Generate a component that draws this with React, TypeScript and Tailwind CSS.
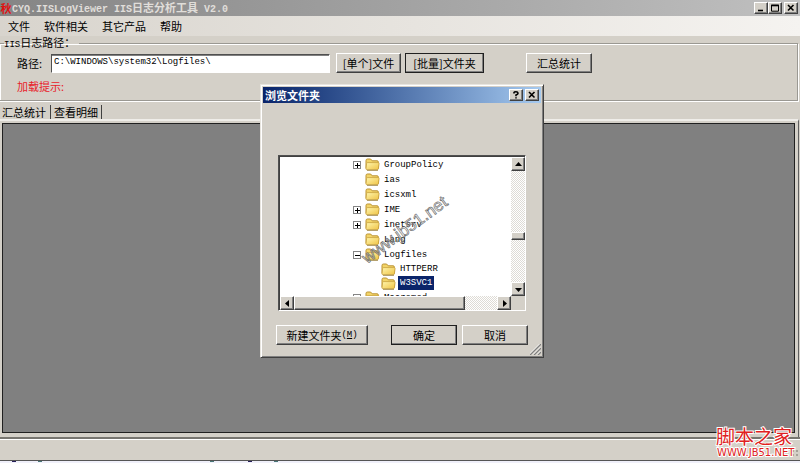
import { useState, type ReactNode } from "react";

const raised =
  "border border-t-white border-l-white border-r-[#404040] border-b-[#404040] bg-[#d4d0c8] shadow-[inset_-1px_-1px_0_#808080]";
const sunken =
  "border border-t-[#505050] border-l-[#505050] border-r-white border-b-white";
const cjk = "font-['Noto_Sans_CJK_SC',sans-serif] text-[11px]";
const mono = "font-['Liberation_Mono','Noto_Sans_CJK_SC',monospace] text-[9px]";
const checker =
  "bg-[repeating-conic-gradient(#ffffff_0_25%,#dedbd5_0_50%)] bg-[length:2px_2px]";

function PushButton({
  children,
  className,
  strong = false,
  onClick,
}: {
  children: ReactNode;
  className: string;
  strong?: boolean;
  onClick?: () => void;
}) {
  return (
    <button
      type="button"
      onClick={onClick}
      className={`flex h-5 shrink-0 items-center justify-center whitespace-nowrap ${raised} ${
        strong ? "outline-1 -outline-offset-1 outline-[#202020]" : ""
      } ${className}`}
    >
      {children}
    </button>
  );
}

function CaptionButton({
  label,
  children,
  onClick,
}: {
  label: string;
  children: ReactNode;
  onClick?: () => void;
}) {
  return (
    <button
      type="button"
      aria-label={label}
      onClick={onClick}
      className={`flex h-3 w-3.5 items-center justify-center ${raised}`}
    >
      <svg width="10" height="8" viewBox="0 0 10 8" fill="none" stroke="#000" strokeWidth="1.6">
        {children}
      </svg>
    </button>
  );
}

const crossPath = <path d="M2 1l5.5 5.5M7.5 1L2 6.5" />;

function ScrollButton({ label, points }: { label: string; points: string }) {
  return (
    <button
      type="button"
      aria-label={label}
      className={`flex h-3.5 w-3.5 shrink-0 items-center justify-center ${raised}`}
    >
      <svg width="9" height="9" viewBox="0 0 9 9">
        <polygon points={points} fill="#000" />
      </svg>
    </button>
  );
}

function Folder() {
  return (
    <svg width="15" height="13" viewBox="0 0 15 13" className="shrink-0">
      <defs>
        <linearGradient id="folder" x1="0" y1="0" x2="1" y2="1">
          <stop offset="0" stopColor="#fff6ae" />
          <stop offset="1" stopColor="#efc243" />
        </linearGradient>
      </defs>
      <path
        d="M1 10.5V2.5Q1 1 2.4 1H5.6L7.2 2.8H12Q13.4 2.8 13.4 4.2V10.5Z"
        fill="#f2d468"
        stroke="#bb9232"
      />
      <path
        d="M1 10.6L1.6 5.4Q1.8 4.6 2.8 4.6H13.2Q14.2 4.6 14.1 5.6L13.4 10.6Q13.2 11.8 12.2 11.8H2Q1 11.8 1 10.6Z"
        fill="url(#folder)"
        stroke="#c79f3c"
        strokeWidth=".8"
      />
      <path d="M2 12.3H13" stroke="#937735" strokeWidth=".8" />
    </svg>
  );
}

type Node = { name: string; sign?: "+" | "-"; deep?: boolean };

const nodes: Node[] = [
  { name: "GroupPolicy", sign: "+" },
  { name: "ias" },
  { name: "icsxml" },
  { name: "IME", sign: "+" },
  { name: "inetsrv", sign: "+" },
  { name: "Lang" },
  { name: "Logfiles", sign: "-" },
  { name: "HTTPERR", deep: true },
  { name: "W3SVC1", deep: true },
  { name: "Macromed", sign: "+" },
];

function FolderTree() {
  const [selected, setSelected] = useState("W3SVC1");
  return (
    <ul role="tree" aria-label="文件夹" className={`h-[139px] min-w-0 flex-1 overflow-hidden bg-white ${mono}`}>
      {nodes.map((node) => (
        <li
          key={node.name}
          role="treeitem"
          aria-selected={selected === node.name}
          onClick={() => setSelected(node.name)}
          className={`flex items-center ${node.deep ? "h-3.5 pl-[89px]" : "h-[15px] pl-[73px]"}`}
        >
          <span className="flex w-3 shrink-0">
            {node.sign && (
              <svg width="8" height="8" viewBox="0 0 8 8" fill="none" shapeRendering="crispEdges">
                <rect x="0.5" y="0.5" width="7" height="7" stroke="#858585" />
                <path
                  d={node.sign === "+" ? "M2 4.5H6.5M4.5 2V6.5" : "M2 4.5H6.5"}
                  stroke="#000"
                />
              </svg>
            )}
          </span>
          <Folder />
          <span
            className={`ml-0.5 px-0.5 leading-[14px] ${
              selected === node.name ? "bg-[#0a246a] text-white" : ""
            }`}
          >
            {node.name}
          </span>
        </li>
      ))}
    </ul>
  );
}

function BrowseDialog({ onClose }: { onClose: () => void }) {
  return (
    <div
      role="dialog"
      aria-label="浏览文件夹"
      className="relative flex h-[274px] w-[284px] flex-col border border-t-[#e8e5df] border-l-[#e8e5df] border-r-[#404040] border-b-[#404040] bg-[#d4d0c8] p-0.5 shadow-[inset_1px_1px_0_#fff,inset_-1px_-1px_0_#808080]"
    >
      <header className="flex h-4 shrink-0 items-center bg-linear-to-r from-[#0a246a] to-[#a6caf0] px-0.5">
        <h2 className={`flex-1 font-bold text-white ${cjk}`}>浏览文件夹</h2>
        <div className="flex gap-0.5">
          <CaptionButton label="帮助">
            <path d="M3 2.6V1.5Q3.2.8 5 .8T7 2.2Q7 3.2 5 4V5.2M5 6.2V7.6" />
          </CaptionButton>
          <CaptionButton label="关闭" onClick={onClose}>
            {crossPath}
          </CaptionButton>
        </div>
      </header>

      <div className={`mx-[15px] mt-[52px] bg-[#d4d0c8] ${sunken}`}>
        <div className="flex border-t border-l border-[#404040]">
          <FolderTree />
          <div className={`flex w-3.5 flex-col ${checker}`}>
            <ScrollButton label="向上" points="1,6 4.5,2 8,6" />
            <div className="flex-1" />
            <div className={`h-2 ${raised}`} />
            <div className="h-[42px]" />
            <ScrollButton label="向下" points="1,3 4.5,7 8,3" />
          </div>
        </div>
        <div className="mr-3.5 flex border-l border-[#404040]">
          <div className={`flex flex-1 ${checker}`}>
            <ScrollButton label="向左" points="6,1 2,4.5 6,8" />
            <div className={`w-[171px] ${raised}`} />
            <div className="flex-1" />
            <ScrollButton label="向右" points="3,1 7,4.5 3,8" />
          </div>
        </div>
      </div>

      <footer className={`mt-3.5 flex pl-[13px] ${cjk}`}>
        <PushButton className="w-[92px]">
          新建文件夹
          <span className={mono}>
            (<u>M</u>)
          </span>
        </PushButton>
        <PushButton className="ml-[23px] w-[66px]" strong onClick={onClose}>
          确定
        </PushButton>
        <PushButton className="ml-[5px] w-[66px]" onClick={onClose}>
          取消
        </PushButton>
      </footer>

      <svg className="absolute right-0.5 bottom-0.5" width="11" height="11" viewBox="0 0 11 11">
        <path d="M0 11L11 0M4 11L11 4M8 11L11 8" stroke="#808080" strokeWidth="1.3" />
        <path d="M-1 10.5L10.5 -1M3 10.5L10.5 3M7 10.5L10.5 7" stroke="#fff" strokeWidth=".7" />
      </svg>

      <svg
        className="pointer-events-none absolute top-[104px] left-[90px]"
        width="110"
        height="85"
        viewBox="0 0 110 85"
      >
        <text
          x="16"
          y="75"
          transform="rotate(-36 16 75)"
          fill="#ffffff"
          fillOpacity=".3"
          stroke="#707070"
          strokeWidth=".7"
          className="font-['Liberation_Sans',sans-serif] text-[17px]"
        >
          www.jb51.net
        </text>
      </svg>
    </div>
  );
}

export default function App() {
  const [open, setOpen] = useState(true);
  const [path, setPath] = useState("C:\\WINDOWS\\system32\\Logfiles\\");
  const [tab, setTab] = useState(0);

  return (
    <div className={`relative flex min-h-screen flex-col overflow-hidden bg-[#d4d0c8] leading-[14px] text-black ${cjk}`}>
      <header className="flex h-4 shrink-0 items-center bg-linear-to-r from-[#858585] to-[#c0c0c0] pr-0.5">
        <span className="flex h-3.5 w-3 items-center justify-center font-bold text-[#e01010]">秋</span>
        <h1 className="flex-1 font-bold whitespace-pre text-[#e0deda]">
          <span className="font-['Liberation_Mono',monospace] text-[10px]">CYQ.IISLogViewer IIS</span>
          日志分析工具
          <span className="font-['Liberation_Mono',monospace] text-[10px]"> V2.0</span>
        </h1>
        <div className="flex">
          <CaptionButton label="最小化">
            <path d="M2 6.5h5" />
          </CaptionButton>
          <CaptionButton label="最大化">
            <path d="M1.5 1.2h7v6h-7z" strokeWidth="1" />
            <path d="M1 1.5h8" />
          </CaptionButton>
          <span className="w-0.5" />
          <CaptionButton label="关闭" onClick={() => setOpen(true)}>
            {crossPath}
          </CaptionButton>
        </div>
      </header>

      <nav className="flex h-5 shrink-0 items-center gap-3.5 bg-linear-to-r from-[#d8d4cd] to-[#f5f3f0] pl-2">
        {["文件", "软件相关", "其它产品", "帮助"].map((item) => (
          <button key={item} type="button">
            {item}
          </button>
        ))}
      </nav>

      <fieldset className="mr-0.5 -ml-px shrink-0 border border-[#9a9892] pb-[7px] shadow-[1px_1px_0_#fff,inset_1px_1px_0_#fff]">
        <legend className="ml-1 pr-1 leading-3">
          <span className={mono}>IIS</span>日志路径：
        </legend>
        <div className="mt-0.5 flex items-center pl-[17px]">
          <label htmlFor="path" className="w-[34px] shrink-0">
            路径:
          </label>
          <input
            id="path"
            value={path}
            onChange={(e) => setPath(e.target.value)}
            className={`h-[19px] w-[279px] min-w-0 bg-white pb-0.5 pl-0.5 shadow-[inset_0_1px_0_#808080] ${sunken} ${mono}`}
          />
          <PushButton className="ml-1.5 w-[65px]" onClick={() => setOpen(true)}>
            [单个]文件
          </PushButton>
          <PushButton className="ml-1 w-[79px]" strong onClick={() => setOpen(true)}>
            [批量]文件夹
          </PushButton>
          <PushButton className="ml-[42px] w-[66px]">汇总统计</PushButton>
        </div>
        <p className="mt-1.5 pl-[17px] text-[#e8202a]">加载提示:</p>
      </fieldset>

      <div role="tablist" className="flex h-[18px] shrink-0 items-end pt-1">
        {["汇总统计", "查看明细"].map((name, i) => (
          <button
            key={name}
            type="button"
            role="tab"
            aria-selected={tab === i}
            onClick={() => setTab(i)}
            className={`h-3.5 w-[51px] border-r border-[#404040] ${i === 0 ? "pb-1 pl-0.5 text-left" : ""}`}
          >
            {name}
          </button>
        ))}
      </div>

      <main className="mr-px flex flex-1 flex-col border-t-2 border-r border-t-[#efede9] border-r-[#606060] pt-0.5 pr-[3px] pb-1 pl-0.5">
        <div className="flex-1 border border-[#202020] bg-[#808080]" />
      </main>

      <footer className="h-6 shrink-0 border-t-2 border-b border-t-[#77756f] border-b-[#555] shadow-[inset_0_1px_0_#fff]" />
      <div className="flex h-0.5 shrink-0 gap-[22px] bg-[#f0f0fa] pl-3">
        <span className="h-px w-1 bg-[#28205a]" />
        <span className="h-px w-1 bg-[#4a7878]" />
        <span className="ml-[146px] h-px w-1 bg-[#4a7878]" />
        <span className="ml-3 h-px w-1 bg-[#28205a]" />
        <span className="h-px w-1 bg-[#4a7878]" />
      </div>

      {open && (
        <div className="pointer-events-none absolute inset-0 flex items-start justify-center pt-21 pl-1">
          <div className="pointer-events-auto">
            <BrowseDialog onClose={() => setOpen(false)} />
          </div>
        </div>
      )}

      <svg className="pointer-events-none absolute right-0 bottom-0" width="90" height="40" viewBox="0 0 90 40">
        <path
          d="M86 27h2v2h-2zM86 31h2v2h-2zM82 31h2v2h-2zM82 27h2v2h-2z"
          fill="#a5a198"
        />
        <g fill="#e02020" stroke="#ffffff" strokeWidth="2" paintOrder="stroke">
          <text x="6" y="21" className="font-['Noto_Sans_CJK_SC',sans-serif] text-[19px]">
            脚本之家
          </text>
          <text x="7" y="33" className="font-['DejaVu_Sans',sans-serif] text-[10px]">
            WWW.JB51.NET
          </text>
        </g>
      </svg>
    </div>
  );
}
